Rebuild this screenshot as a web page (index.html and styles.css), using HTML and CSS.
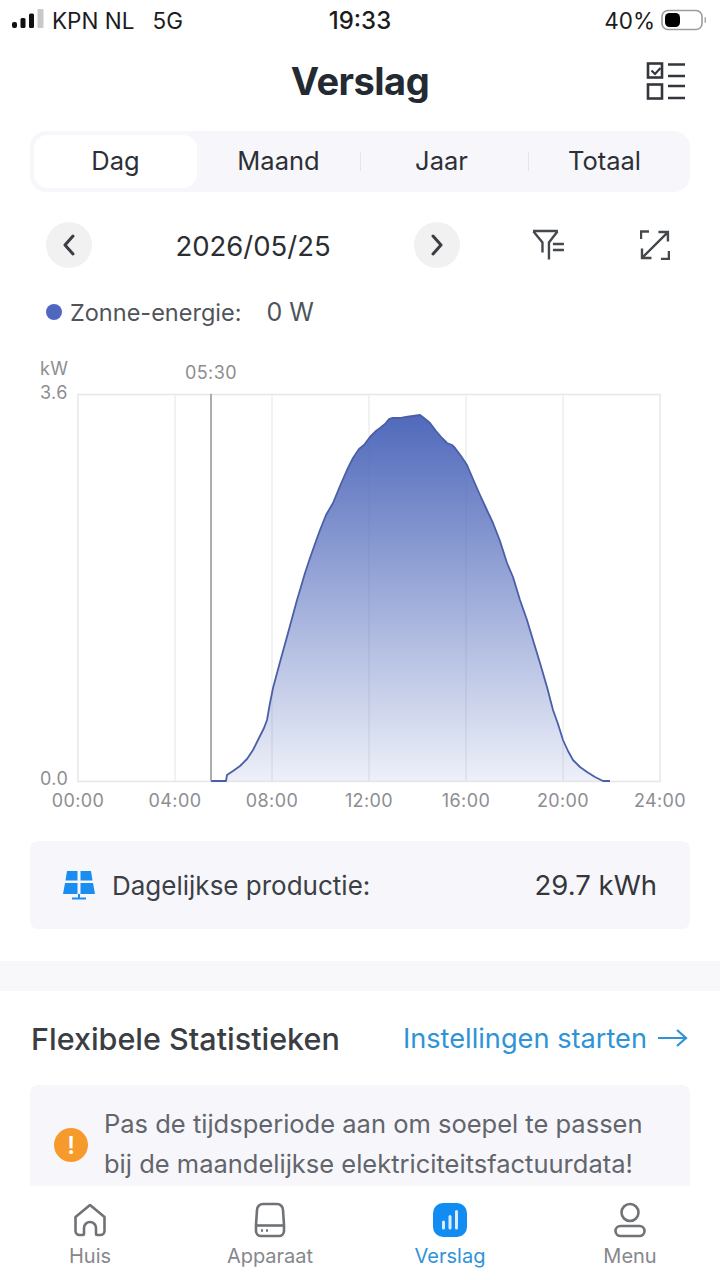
FILE: index.html
```html
<!DOCTYPE html>
<html lang="nl">
<head>
<meta charset="utf-8">
<title>Verslag</title>
<link rel="stylesheet" href="styles.css">
</head>
<body>
<div class="phone">
  <div class="status">
    <div class="status-left">
      <svg class="signal" width="32" height="20" viewBox="0 0 32 20"><rect x="0" y="13" width="5" height="6" rx="2" fill="#111"/><rect x="8.500" y="9" width="5" height="10" rx="1.500" fill="#111"/><rect x="17" y="4.500" width="5" height="14.500" rx="1.500" fill="#111"/><rect x="25.500" y="0" width="6" height="19" rx="1" fill="#c9c9c9"/></svg>
      <span>KPN NL</span><span class="net">5G</span>
    </div>
    <div class="status-time">19:33</div>
    <div class="status-right">
      <span>40%</span>
      <svg width="46" height="22" viewBox="0 0 46 22"><rect x="1" y="1.500" width="40" height="19" rx="6" fill="none" stroke="#9c9c9c" stroke-width="1.600"/><rect x="4" y="4" width="15" height="14" rx="4.500" fill="#000"/><rect x="43.500" y="8" width="1.500" height="6" rx="0.700" fill="#aaa"/></svg>
    </div>
  </div>

  <header class="title-bar">
    <h1>Verslag</h1>
    <svg class="title-icon" width="40" height="40" viewBox="0 0 40 40" fill="none" stroke="#33373d" stroke-width="2.600"><rect x="2" y="2.500" width="14" height="14"/><path d="M5.500 9.500l3.500 3.500 5.500-6" stroke-width="2.200"/><rect x="2" y="23.500" width="14" height="14"/><path d="M22 3.500h17M22 15h17M22 25h17M22 37h17"/></svg>
  </header>

  <nav class="tabs">
    <div class="tab tab-active">Dag</div>
    <div class="tab">Maand</div>
    <div class="tab tab-sep">Jaar</div>
    <div class="tab tab-sep">Totaal</div>
  </nav>

  <div class="date-row">
    <div class="round-btn"><svg width="16" height="24" viewBox="0 0 16 24" fill="none" stroke="#3a3d42" stroke-width="3" stroke-linecap="round" stroke-linejoin="round"><path d="M12 3L4 12l8 9"/></svg></div>
    <div class="date">2026/05/25</div>
    <div class="round-btn"><svg width="16" height="24" viewBox="0 0 16 24" fill="none" stroke="#3a3d42" stroke-width="3" stroke-linecap="round" stroke-linejoin="round"><path d="M4 3l8 9-8 9"/></svg></div>
    <svg class="filter-icon" width="34" height="32" viewBox="0 0 34 32" fill="none" stroke="#45484d" stroke-width="2.400"><path d="M1 2h25M1.500 2.500l9 11v10M25.500 2.500l-8.500 11v17M21 15h11M21 21h11"/></svg>
    <svg class="expand-icon" width="30" height="30" viewBox="0 0 30 30" fill="none" stroke="#45484d" stroke-width="2.400"><path d="M1 9V1.500h8M21 29h8v-8M3 27L27 3M18.500 2H28v9.500M2 18.500V28h9.500" /></svg>
  </div>

  <div class="legend">
    <span class="dot"></span><span class="legend-label">Zonne-energie:</span><span class="legend-value">0 W</span>
  </div>

  <div class="chart">
    <svg width="720" height="470" viewBox="0 0 720 470">
      <defs>
        <linearGradient id="solar" x1="0" y1="0" x2="0" y2="1">
          <stop offset="0" stop-color="#5069bb"/>
          <stop offset="1" stop-color="#5069bb" stop-opacity="0.1"/>
        </linearGradient>
      </defs>
      <g transform="translate(0 -342)">
        <rect x="78" y="394.500" width="582" height="387" fill="none" stroke="#e6e6e8" stroke-width="1.500"/>
        <path d="M175 394v387M272 394v387M369 394v387M466 394v387M563 394v387" stroke="#e9e9ec" stroke-width="1.200"/>
        <path class="area" fill="url(#solar)" d="M226 781L227 775L233 771L240 766L247 759L253 750L260 736L264 728L267 720L270 703L273 688L280 662L288 633L297 600L300 590L305 573L310 558L316 541L320 530L326 515L333 503L340 486L347 470L353 458L359 449L364 445L370 437L376 431L380 428L385 424L389 419L392 418L397 418L401 418L406 417L413 416L420 415L424 418L430 423L436 431L442 438L447 443L452 445L455 448L461 456L467 465L473 479L480 495L486 508L493 523L500 541L507 563L513 577L520 600L527 620L533 640L540 663L547 687L553 710L558 724L563 740L568 751L573 760L580 767L587 772L595 777L603 781L610 781Z"/>
        <path class="line" fill="none" stroke="#4a5fa8" stroke-width="1.800" stroke-linejoin="round" d="M211 781L226 781L227 775L233 771L240 766L247 759L253 750L260 736L264 728L267 720L270 703L273 688L280 662L288 633L297 600L300 590L305 573L310 558L316 541L320 530L326 515L333 503L340 486L347 470L353 458L359 449L364 445L370 437L376 431L380 428L385 424L389 419L392 418L397 418L401 418L406 417L413 416L420 415L424 418L430 423L436 431L442 438L447 443L452 445L455 448L461 456L467 465L473 479L480 495L486 508L493 523L500 541L507 563L513 577L520 600L527 620L533 640L540 663L547 687L553 710L558 724L563 740L568 751L573 760L580 767L587 772L595 777L603 781L610 781"/>
        <path d="M211 394v387" stroke="#909296" stroke-width="1.500"/>
        <g class="axis">
          <text x="40" y="375">kW</text>
          <text x="40" y="399">3.6</text>
          <text x="40" y="785">0.0</text>
          <text x="211" y="379" text-anchor="middle">05:30</text>
          <text x="78" y="807" text-anchor="middle">00:00</text>
          <text x="175" y="807" text-anchor="middle">04:00</text>
          <text x="272" y="807" text-anchor="middle">08:00</text>
          <text x="369" y="807" text-anchor="middle">12:00</text>
          <text x="466" y="807" text-anchor="middle">16:00</text>
          <text x="563" y="807" text-anchor="middle">20:00</text>
          <text x="660" y="807" text-anchor="middle">24:00</text>
        </g>
      </g>
    </svg>
  </div>

  <div class="card summary">
    <svg width="34" height="30" viewBox="0 0 34 30"><path d="M5 1h10.500v9.500H3.500zM18.500 1H29l1.500 9.500h-12zM3 13h12.500v11H1zM18.500 13H31l2 11H18.500z" fill="#1b8cf0"/><path d="M17 24v4M10 28.500h14" stroke="#1b8cf0" stroke-width="2"/></svg>
    <span class="summary-label">Dagelijkse productie:</span>
    <span class="summary-value">29.7 kWh</span>
  </div>

  <div class="divider"></div>

  <div class="section-head">
    <h2>Flexibele Statistieken</h2>
    <div class="link">Instellingen starten
      <svg width="31" height="20" viewBox="0 0 31 20" fill="none" stroke="#2f93d6" stroke-width="2.200"><path d="M1 10h28M20 2l9 8-9 8"/></svg>
    </div>
  </div>

  <div class="card notice">
    <div class="warn">!</div>
    <p>Pas de tijdsperiode aan om soepel te passen bij de maandelijkse elektriciteitsfactuurdata!</p>
  </div>

  <nav class="bottom-nav">
    <div class="nav-item">
      <svg width="36" height="36" viewBox="0 0 36 36" fill="none" stroke="#6f7276" stroke-width="2.600" stroke-linejoin="round"><path d="M18 3L3.500 15v14a4 4 0 0 0 4 4h3.500a1 1 0 0 0 1-1v-6a6 6 0 0 1 12 0v6a1 1 0 0 0 1 1h3.500a4 4 0 0 0 4-4V15z"/></svg>
      <span>Huis</span>
    </div>
    <div class="nav-item">
      <svg width="36" height="36" viewBox="0 0 36 36" fill="none" stroke="#6f7276" stroke-width="2.600"><path d="M4 23L5 8a6 6 0 0 1 6-6h14a6 6 0 0 1 6 6l1 15v6a5 5 0 0 1-5 5H9a5 5 0 0 1-5-5z"/><path d="M4 23.500h28"/><path d="M9 28.500h2M14 28.500h2" stroke-width="2.400"/></svg>
      <span>Apparaat</span>
    </div>
    <div class="nav-item nav-active">
      <svg width="36" height="36" viewBox="0 0 36 36"><rect x="1" y="1" width="34" height="34" rx="10" fill="#118cf2"/><path d="M11.500 20v6M18 14.500v11.500M24.500 9.500v16.500" stroke="#fff" stroke-width="3" stroke-linecap="round" opacity="0.850"/></svg>
      <span>Verslag</span>
    </div>
    <div class="nav-item">
      <svg width="36" height="36" viewBox="0 0 36 36" fill="none" stroke="#6f7276" stroke-width="2.600"><ellipse cx="18" cy="10.500" rx="8.500" ry="8.500"/><rect x="3.500" y="24" width="29" height="10" rx="5"/></svg>
      <span>Menu</span>
    </div>
  </nav>
</div>
</body>
</html>
```
FILE: styles.css
```css
* { box-sizing: border-box; }
html, body { margin: 0; padding: 0; background: #fff; }
body { font-family: Inter, "Noto Sans", sans-serif; color: #2c3036; }
.phone { position: relative; width: 720px; height: 1280px; overflow: hidden; background: #fff; }

.status { height: 40px; padding: 0 13px 0 12px; display: flex; align-items: center; justify-content: space-between; font-size: 22.500px; color: #1c1c1e; position: relative; }
.status-left { display: flex; align-items: center; gap: 8px; }
.status-left .net { margin-left: 10px; }
.signal { margin-bottom: 2px; }
.status-time { position: absolute; left: 0; right: 0; text-align: center; font-weight: 500; font-size: 24px; }
.status-right { display: flex; align-items: center; gap: 6px; }

.title-bar { position: relative; height: 91px; display: flex; align-items: center; justify-content: center; }
.title-bar h1 { margin: 0 0 9px; font-size: 38px; font-weight: 700; color: #242a32; letter-spacing: -0.5px; }
.title-icon { position: absolute; right: 34px; top: 21px; }

.tabs { margin: 0 30px; height: 61px; padding: 4px; background: #f7f7fb; border-radius: 16px; display: grid; grid-template-columns: repeat(4, 1fr); align-items: center; }
.tab { position: relative; height: 53px; padding-bottom: 2px; display: flex; align-items: center; justify-content: center; font-size: 25.500px; color: #2c3036; }
.tab-active { background: #fff; border-radius: 14px; }
.tab-sep::before { content: ""; position: absolute; left: 0; top: 17px; bottom: 17px; width: 1px; background: #e6e6ea; }
.tab-sep + .tab-sep::before { left: 5px; }

.date-row { height: 62px; margin-top: 22px; padding: 0 50px 0 46px; display: flex; align-items: center; }
.round-btn { width: 46px; height: 46px; border-radius: 50%; background: #f1f1f2; display: flex; align-items: center; justify-content: center; flex: none; }
.date { width: 323px; padding-top: 2px; text-align: center; font-size: 27.500px; color: #2b2e33; }
.filter-icon { margin-left: 72px; }
.expand-icon { margin-left: 74px; }

.legend { height: 40px; margin-top: 16px; padding-left: 46px; display: flex; align-items: center; font-size: 23.500px; color: #50545a; }
.dot { width: 16px; height: 16px; border-radius: 50%; background: #4f68bf; margin-right: 8px; }
.legend-value { margin-left: 25px; font-size: 25px; }

.chart { height: 500px; margin-top: 10px; }
.chart svg { display: block; }
.axis text { font-family: Inter, "Noto Sans", sans-serif; font-size: 18px; fill: #8c8e91; letter-spacing: 0.400px; }

.card { margin: 0 30px; background: #f7f7fb; border-radius: 8px; }
.summary { height: 88px; margin-top: -1px; padding: 0 33px 0 32px; display: flex; align-items: center; font-size: 26px; color: #3c4046; }
.summary-label { margin-left: 16px; flex: 1; }
.summary-value { font-size: 27.500px; color: #33363b; }

.divider { height: 30px; margin-top: 32px; background: #f8f8fb; }

.section-head { height: 94px; padding: 0 32px 0 31px; display: flex; align-items: center; justify-content: space-between; }
.section-head h2 { margin: 0; font-size: 30.500px; font-weight: 500; color: #3a3d42; }
.link { display: flex; align-items: center; gap: 10px; font-size: 27.200px; color: #2f93d6; }

.notice { height: 140px; padding: 19px 30px 0 24px; display: flex; align-items: flex-start; gap: 16px; }
.notice p { margin: 0; font-size: 25.500px; line-height: 40px; color: #62656b; }
.warn { width: 34px; height: 34px; margin-top: 24px; flex: none; border-radius: 50%; background: #f79a2c; color: #fff; font-size: 24px; font-weight: 600; display: flex; align-items: center; justify-content: center; }

.bottom-nav { position: absolute; left: 0; right: 0; bottom: 0; height: 94px; background: #fff; display: grid; grid-template-columns: repeat(4, 1fr); }
.nav-item { display: flex; flex-direction: column; align-items: center; padding-top: 16px; font-size: 20px; color: #85888c; gap: 6px; }
.nav-item span { line-height: 24px; }
.nav-active { color: #2f93d6; }
```
